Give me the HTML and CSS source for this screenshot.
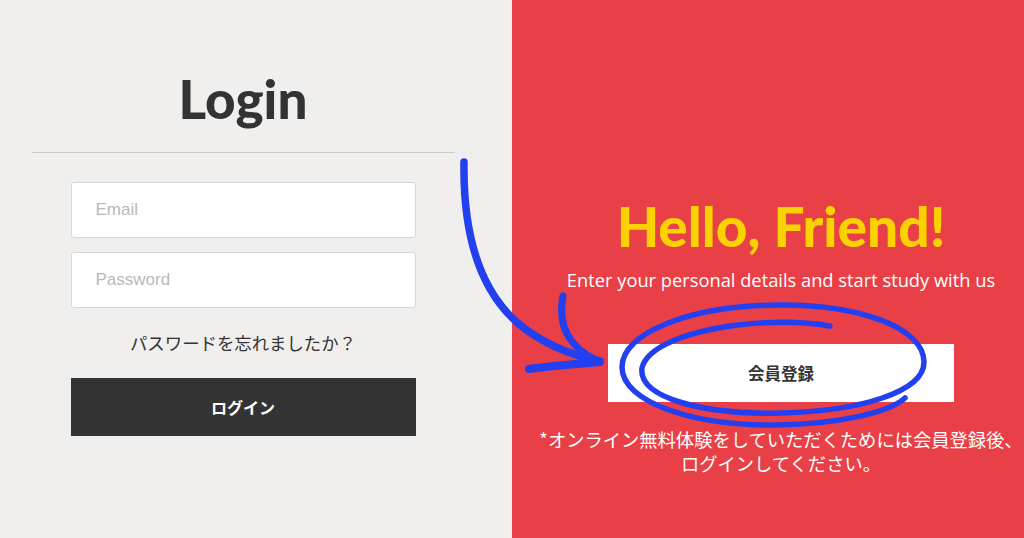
FILE: index.html
```html
<!DOCTYPE html>
<html lang="ja">
<head>
<meta charset="utf-8">
<title>Login</title>
<link rel="stylesheet" href="styles.css">
</head>
<body>
<div class="page">
  <section class="left">
    <h1 class="title">Login</h1>
    <hr class="rule">
    <div class="field"><span class="placeholder">Email</span></div>
    <div class="field"><span class="placeholder">Password</span></div>
    <p class="forgot">パスワードを忘れましたか？</p>
    <div class="btn-dark">ログイン</div>
  </section>
  <section class="right">
    <h2 class="hello">Hello, Friend!</h2>
    <p class="sub">Enter your personal details and start study with us</p>
    <div class="btn-white">会員登録</div>
    <p class="note">*オンライン無料体験をしていただくためには会員登録後、<br>ログインしてください。</p>
  </section>
  <svg class="scribble" width="1024" height="538" viewBox="0 0 1024 538">
    <g fill="none" stroke="#2340f0" stroke-linecap="round" stroke-linejoin="round">
      <path d="M464 162 C463 230 478 290 520 325 C545 345 575 356 600 361" stroke-width="7.5"/>
      <path d="M563 296 C558 322 566 346 598 361" stroke-width="7"/>
      <path d="M529 369 C552 366 578 364 600 362" stroke-width="8"/>
      <path d="M830 326 C760 314 650 332 642 368 C638 398 704 415 782 413 C860 411 924 392 924 362 C924 328 860 304 777 305 C692 306 622 332 622 367 C622 402 692 426 777 425 C840 424 890 412 905 398" stroke-width="5.5"/>
    </g>
  </svg>
</div>
</body>
</html>
```
FILE: styles.css
```css
* { box-sizing: border-box; }
html, body { margin: 0; padding: 0; }
body { width: 1024px; height: 538px; overflow: hidden; }
.page {
  position: relative;
  display: flex;
  width: 1024px;
  height: 538px;
}
.left {
  width: 512px;
  background: #f0efed;
  display: flex;
  flex-direction: column;
  align-items: center;
  padding: 0 26px 0 0;
}
.title {
  margin: 72px 0 0;
  font-family: Lato, "Open Sans", sans-serif;
  font-weight: 900;
  font-size: 53px;
  line-height: 54px;
  color: #333333;
}
.rule {
  align-self: stretch;
  margin: 26px 31px 0 32px;
  border: 0;
  border-top: 1px solid #c9c7c5;
  height: 0;
}
.field {
  width: 345px;
  height: 56px;
  margin-top: 29px;
  background: #fff;
  border: 1px solid #d9d7d5;
  border-radius: 3px;
  display: flex;
  align-items: center;
  padding-left: 24px;
}
.field + .field { margin-top: 14px; }
.placeholder {
  font-family: "Liberation Sans", Arial, sans-serif;
  font-size: 17px;
  color: #b9b9b9;
}
.forgot {
  margin: 23px 0 0;
  font-family: "Noto Sans CJK JP", sans-serif;
  font-size: 17.4px;
  line-height: 24px;
  color: #333;
}
.btn-dark {
  width: 345px;
  height: 58px;
  margin-top: 23px;
  background: #333333;
  color: #fff;
  font-family: "Noto Sans CJK JP", sans-serif;
  font-weight: 700;
  font-size: 16px;
  display: flex;
  align-items: center;
  justify-content: center;
}
.right {
  width: 512px;
  background: #e93f47;
  display: flex;
  flex-direction: column;
  align-items: center;
  padding: 0 0 0 26px;
}
.hello {
  margin: 196px 0 0;
  font-family: Lato, "Open Sans", sans-serif;
  font-weight: 900;
  font-size: 55px;
  line-height: 60px;
  color: #fad200;
  white-space: nowrap;
}
.sub {
  margin: 11px 0 0;
  font-family: "Open Sans", "Noto Sans", sans-serif;
  font-size: 18.3px;
  line-height: 26px;
  color: #fff;
  white-space: nowrap;
}
.btn-white {
  width: 346px;
  height: 58px;
  margin-top: 51px;
  background: #fff;
  color: #333;
  font-family: "Noto Sans CJK JP", sans-serif;
  font-weight: 700;
  font-size: 16.5px;
  display: flex;
  align-items: center;
  justify-content: center;
}
.note {
  margin: 25px 0 0;
  font-family: "Noto Sans CJK JP", sans-serif;
  font-weight: 400;
  font-size: 18.3px;
  line-height: 24px;
  color: #fff;
  text-align: center;
  white-space: nowrap;
}
.scribble {
  position: absolute;
  left: 0;
  top: 0;
  pointer-events: none;
}
```
